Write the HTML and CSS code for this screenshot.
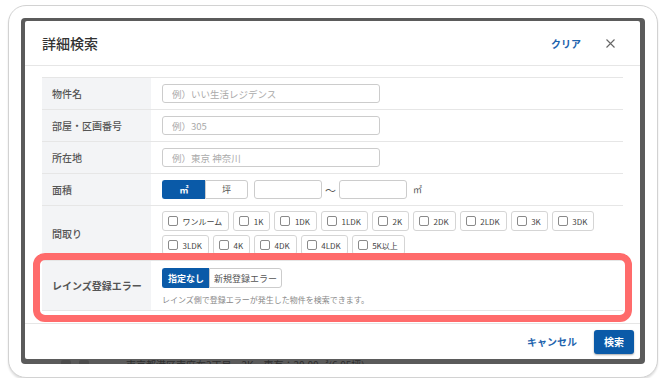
FILE: index.html
```html
<!DOCTYPE html>
<html lang="ja">
<head>
    <meta charset="UTF-8">
    <meta name="viewport" content="width=device-width, initial-scale=1.0">
    <title>詳細検索</title>
    <link rel="stylesheet" href="styles.css">
</head>
<body>

    <div class="frame">
        <div class="screen">
            <div class="modal">
                <div class="modal-header">
                    <h1 class="modal-title">詳細検索</h1>
                    <div class="header-actions">
                        <a class="clear-link" href="#">クリア</a>
                        <button class="close-btn" aria-label="閉じる">
                            <svg width="9" height="9" viewBox="0 0 9 9"><path d="M0.5 0.5 L8.5 8.5 M8.5 0.5 L0.5 8.5" stroke="#666" stroke-width="1.1" fill="none"/></svg>
                        </button>
                    </div>
                </div>

                <div class="modal-body">
                    <div class="search-table">
                        <div class="row">
                            <div class="row-label">物件名</div>
                            <div class="row-field"><input class="text-input" type="text" placeholder="例）いい生活レジデンス"></div>
                        </div>
                        <div class="row">
                            <div class="row-label">部屋・区画番号</div>
                            <div class="row-field"><input class="text-input" type="text" placeholder="例）305"></div>
                        </div>
                        <div class="row">
                            <div class="row-label">所在地</div>
                            <div class="row-field"><input class="text-input" type="text" placeholder="例）東京 神奈川"></div>
                        </div>
                        <div class="row">
                            <div class="row-label">面積</div>
                            <div class="row-field">
                                <div class="seg">
                                    <span class="seg-btn seg-active">㎡</span>
                                    <span class="seg-btn">坪</span>
                                </div>
                                <input class="area-input" type="text">
                                <span class="tilde">～</span>
                                <input class="area-input area-input-to" type="text">
                                <span class="unit">㎡</span>
                            </div>
                        </div>
                        <div class="row">
                            <div class="row-label">間取り</div>
                            <div class="row-field madori-field">
                                <div class="madori">
                                    <label class="check"><span class="check-box"></span>ワンルーム</label>
                                    <label class="check"><span class="check-box"></span>1K</label>
                                    <label class="check"><span class="check-box"></span>1DK</label>
                                    <label class="check"><span class="check-box"></span>1LDK</label>
                                    <label class="check"><span class="check-box"></span>2K</label>
                                    <label class="check"><span class="check-box"></span>2DK</label>
                                    <label class="check"><span class="check-box"></span>2LDK</label>
                                    <label class="check"><span class="check-box"></span>3K</label>
                                    <label class="check"><span class="check-box"></span>3DK</label>
                                    <label class="check"><span class="check-box"></span>3LDK</label>
                                    <label class="check"><span class="check-box"></span>4K</label>
                                    <label class="check"><span class="check-box"></span>4DK</label>
                                    <label class="check"><span class="check-box"></span>4LDK</label>
                                    <label class="check"><span class="check-box"></span>5K以上</label>
                                </div>
                            </div>
                        </div>
                        <div class="row row-highlight">
                            <div class="row-label label-strong">レインズ登録エラー</div>
                            <div class="row-field reins-field">
                                <div class="seg">
                                    <span class="seg-btn seg-active seg-wide">指定なし</span>
                                    <span class="seg-btn seg-wide2">新規登録エラー</span>
                                </div>
                                <p class="help-text">レインズ側で登録エラーが発生した物件を検索できます。</p>
                            </div>
                            <div class="highlight-box"></div>
                        </div>
                    </div>
                </div>

                <div class="modal-footer">
                    <a class="cancel-link" href="#">キャンセル</a>
                    <button class="btn-primary">検索</button>
                </div>
            </div>

            <div class="page-peek">
                <span class="peek-icon"></span>
                <span class="peek-icon"></span>
                <span class="peek-text">東京都港区南麻布2丁目　2K　専有：20.00㎡(6.05坪)</span>
            </div>
        </div>
    </div>

</body>
</html>
```

FILE: styles.css
```css
* {
    box-sizing: border-box;
}
body {
    margin: 0;
    background-color: #fff;
    font-family: "Noto Sans CJK JP", "Noto Sans", sans-serif;
    color: #333;
}
.frame {
    margin: 5px 0 0 8px;
    width: 650px;
    height: 373px;
    padding: 12px;
    background-color: #fff;
    border: 1px solid #d2d2d2;
    border-radius: 18px;
    box-shadow: 0 2px 2px rgba(0, 0, 0, 0.12);
}
.screen {
    height: 346px;
    padding: 3px 5px 0 4px;
    background-color: #5b5b5b;
    border-radius: 4px;
    overflow: hidden;
}
.modal {
    background-color: #fff;
    border-radius: 2px;
}

/* header */
.modal-header {
    height: 45px;
    display: flex;
    align-items: center;
    justify-content: space-between;
    padding: 0 25px 0 17px;
    border-bottom: 1px solid #e6e6e6;
}
.modal-title {
    margin: 0;
    font-size: 14px;
    font-weight: 500;
    color: #333;
}
.header-actions {
    display: flex;
    align-items: center;
    gap: 25px;
}
.clear-link {
    font-size: 10px;
    font-weight: 700;
    color: #1d63ad;
    text-decoration: none;
}
.close-btn {
    display: flex;
    padding: 0;
    border: none;
    background: none;
}

/* body */
.modal-body {
    padding: 11px 17px 12px;
}
.search-table {
    border-top: 1px solid #e6e6e6;
}
.row {
    display: flex;
    border-bottom: 1px solid #e6e6e6;
}
.row-label {
    width: 109px;
    flex-shrink: 0;
    display: flex;
    align-items: center;
    padding-left: 10px;
    background-color: #f3f4f6;
    font-size: 10px;
    font-weight: 500;
    color: #555;
}
.label-strong {
    font-weight: 700;
}
.row-field {
    flex: 1;
    min-height: 31px;
    display: flex;
    align-items: center;
    padding: 6px 12px 6px 11px;
}
.text-input {
    width: 218px;
    height: 19px;
    padding: 0 9px;
    border: 1px solid #ccc;
    border-radius: 3px;
    font-family: inherit;
    font-size: 9.5px;
    color: #333;
}
.text-input::placeholder {
    color: #aaa;
}

/* segmented toggle */
.seg {
    display: flex;
}
.seg-btn {
    width: 43px;
    height: 19px;
    display: flex;
    align-items: center;
    justify-content: center;
    border: 1px solid #ccc;
    font-size: 9px;
    color: #555;
    background-color: #fff;
}
.seg-btn:first-child {
    border-radius: 3px 0 0 3px;
    border-right: none;
}
.seg-btn:last-child {
    border-radius: 0 3px 3px 0;
}
.seg-active {
    background-color: #0a5aa8;
    border-color: #0a5aa8;
    color: #fff;
    font-weight: 700;
}
.seg-wide {
    width: 47px;
    height: 20px;
}
.seg-wide2 {
    width: 73px;
    height: 20px;
}
.area-input {
    width: 68px;
    height: 19px;
    margin-left: 6px;
    border: 1px solid #ccc;
    border-radius: 3px;
}
.area-input-to {
    margin-left: 0;
}
.tilde {
    width: 17px;
    text-align: center;
    font-size: 11px;
    color: #555;
}
.unit {
    margin-left: 6px;
    font-size: 9px;
    color: #555;
}

/* madori */
.madori-field {
    padding-top: 5px;
    padding-bottom: 5px;
}
.madori {
    display: flex;
    flex-wrap: wrap;
    gap: 4px;
}
.check {
    height: 20px;
    display: inline-flex;
    align-items: center;
    gap: 4.5px;
    padding: 0 6px 0 5px;
    border: 1px solid #d5d5d5;
    border-radius: 3px;
    font-size: 8px;
    color: #444;
    background-color: #fff;
}
.check-box {
    width: 10px;
    height: 10px;
    border: 1px solid #8a8a8a;
    border-radius: 2px;
}

/* reins row */
.row-highlight {
    position: relative;
}
.reins-field {
    flex-direction: column;
    align-items: flex-start;
    gap: 6px;
    padding-top: 7px;
    padding-bottom: 5px;
}
.help-text {
    margin: 0;
    font-size: 8px;
    line-height: 11px;
    color: #888;
}
.highlight-box {
    position: absolute;
    top: -8px;
    left: -9px;
    right: -9px;
    bottom: -12px;
    border: 7px solid #ff6b6b;
    border-radius: 12px;
    pointer-events: none;
}

/* footer */
.modal-footer {
    height: 36px;
    display: flex;
    align-items: center;
    justify-content: flex-end;
    gap: 17px;
    padding-right: 6px;
    border-top: 1px solid #e6e6e6;
}
.cancel-link {
    font-size: 10px;
    font-weight: 700;
    color: #1d63ad;
    text-decoration: none;
}
.btn-primary {
    width: 40px;
    height: 24px;
    padding: 0;
    border: none;
    border-radius: 3px;
    background-color: #0a5aa8;
    color: #fff;
    font-family: inherit;
    font-size: 10px;
    font-weight: 700;
    box-shadow: 0 1px 2px rgba(0, 0, 0, 0.35);
}

/* dimmed page below the modal */
.page-peek {
    height: 6px;
    display: flex;
    align-items: flex-start;
    padding: 1px 0 0 36px;
    overflow: hidden;
}
.peek-icon {
    width: 10px;
    height: 10px;
    margin-right: 8px;
    border-radius: 2px;
    background-color: #4c4c4c;
}
.peek-text {
    margin-left: 29px;
    font-size: 10px;
    line-height: 10px;
    color: #2e2e2e;
}
```
